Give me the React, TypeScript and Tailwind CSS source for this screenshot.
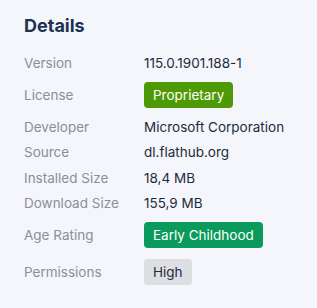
import React from 'react';

type Row = {
  label: string;
  value: string;
  badge?: string;
};

const rows: Row[] = [
  { label: 'Version', value: '115.0.1901.188-1' },
  { label: 'License', value: 'Proprietary', badge: 'bg-[#4e9a06] text-white' },
  { label: 'Developer', value: 'Microsoft Corporation' },
  { label: 'Source', value: 'dl.flathub.org' },
  { label: 'Installed Size', value: '18,4 MB' },
  { label: 'Download Size', value: '155,9 MB' },
  { label: 'Age Rating', value: 'Early Childhood', badge: 'bg-[#0a9a5c] text-white' },
  { label: 'Permissions', value: 'High', badge: 'bg-[#dedfe3] text-[#1f2b3d]' },
];

// vertical rhythm per row, measured off the design
const rowSpacing: Record<string, string> = {
  Version: 'h-[26px]',
  License: 'py-[6px]',
  Developer: 'h-[25.5px]',
  Source: 'h-[25.5px]',
  'Installed Size': 'h-[25.5px]',
  'Download Size': 'h-[25.5px]',
  'Age Rating': 'pt-[6px]',
  Permissions: 'pt-[11px]',
};

export default function App() {
  return (
    <div className="w-[317px] h-[308px] bg-[#f4f6fb] px-6 pt-[14px] font-['Inter',sans-serif]">
      <h2 className="text-[18px] leading-6 font-bold text-[#1c3250] mb-[12px]">Details</h2>
      <div className="flex flex-col">
        {rows.map((row) => (
          <div key={row.label} className={`flex items-center ${rowSpacing[row.label]}`}>
            <div className="w-[120px] text-[13.5px] text-[#8a8f98]">{row.label}</div>
            {row.badge ? (
              <span className={`h-[26px] px-[9px] rounded-[4px] flex items-center text-[13.5px] ${row.badge}`}>
                {row.value}
              </span>
            ) : (
              <div className="text-[13.5px] text-[#1f2b3d]">{row.value}</div>
            )}
          </div>
        ))}
      </div>
    </div>
  );
}
